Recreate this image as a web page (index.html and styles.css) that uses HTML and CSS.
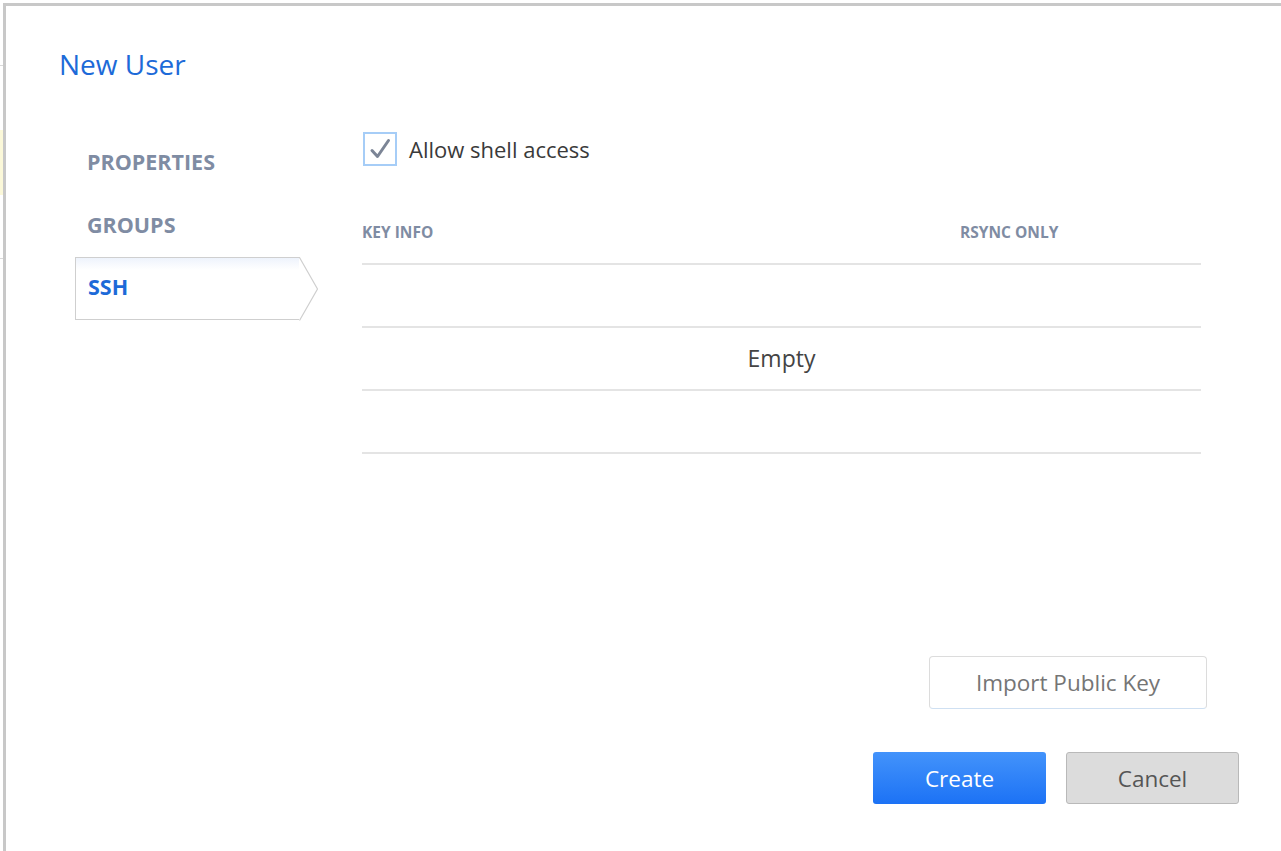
FILE: index.html
```html
<!DOCTYPE html>
<html>
<head>
<meta charset="utf-8">
<link rel="stylesheet" href="styles.css">
</head>
<body>
<div class="backdrop">
  <div class="bg-line bg-line-top"></div>
  <div class="bg-note"></div>
  <div class="bg-line bg-line-mid"></div>
</div>
<div class="dialog">
  <h1 class="title">New User</h1>
  <div class="body">
    <nav class="tabs">
      <div class="tab">PROPERTIES</div>
      <div class="tab">GROUPS</div>
      <div class="tab tab-active">SSH
        <svg class="tab-arrow" width="20" height="64" viewBox="0 0 20 64">
          <path d="M0 1 L1 1 L18.5 32 L1 63 L0 63 Z" fill="#fff"/>
          <path d="M0.5 0.5 L18.5 32 L0.5 63.5" fill="none" stroke="#cfcfcf" stroke-width="1.2"/>
        </svg>
      </div>
    </nav>
    <main class="main">
      <label class="check-row">
        <span class="checkbox">
          <svg width="24" height="24" viewBox="0 0 24 24"><path d="M4 13.5 L9.5 19.5 L20.5 3.5" fill="none" stroke="#7c8596" stroke-width="3" stroke-linecap="round" stroke-linejoin="round"/></svg>
        </span>
        <span class="check-label">Allow shell access</span>
      </label>
      <div class="table">
        <div class="thead">
          <div class="th th-key">KEY INFO</div>
          <div class="th th-rsync">RSYNC ONLY</div>
        </div>
        <div class="row"></div>
        <div class="row row-empty">Empty</div>
        <div class="row"></div>
      </div>
      <div class="import-row">
        <button class="btn btn-import">Import Public Key</button>
      </div>
    </main>
  </div>
  <footer class="footer">
    <button class="btn btn-primary">Create</button>
    <button class="btn btn-cancel">Cancel</button>
  </footer>
</div>
</body>
</html>
```
FILE: styles.css
```css
html, body {
  margin: 0;
  padding: 0;
  background: #fff;
  overflow: hidden;
  width: 1281px;
  height: 851px;
  font-family: "Open Sans", "Noto Sans", sans-serif;
}

.backdrop {
  width: 6px;
  height: 851px;
  display: flex;
  flex-direction: column;
}
.bg-line { height: 1px; background: #d9d9d9; }
.bg-line-top { margin-top: 65px; }
.bg-note { margin-top: 64px; height: 65px; background: #fbf8d9; }
.bg-line-mid { margin-top: 63px; }

.dialog {
  position: absolute;
  left: 3px;
  top: 3px;
  width: 1278px;
  height: 848px;
  box-sizing: border-box;
  border-top: 3px solid #c8c8c8;
  border-left: 3px solid #c8c8c8;
  background: #fff;
  overflow: hidden;
}

.title {
  margin: 0;
  padding: 40px 0 0 53px;
  font-weight: 400;
  font-size: 28px;
  line-height: 36px;
  color: #1d6ad8;
}

.body {
  display: flex;
  margin-top: 49px;
}

.tabs {
  width: 225px;
  margin-left: 69px;
  display: flex;
  flex-direction: column;
}
.tab {
  position: relative;
  height: 63px;
  line-height: 61px;
  padding-left: 12px;
  font-size: 21.5px;
  font-weight: 700;
  color: #7f8ca3;
  box-sizing: border-box;
}
.tab-active {
  height: 63px;
  line-height: 58px;
  color: #1d6ad8;
  border: 1px solid #cfcfcf;
  border-right: none;
  background: linear-gradient(#eef3fc 0, #fff 12px);
}
.tab-arrow {
  position: absolute;
  right: -19px;
  top: -1px;
}

.main {
  margin-left: 62px;
  width: 845px;
  display: flex;
  flex-direction: column;
}

.check-row {
  display: flex;
  align-items: center;
  height: 35px;
}
.checkbox {
  width: 30px;
  height: 30px;
  margin-left: 1px;
  border: 2px solid #a6cdf7;
  display: flex;
  align-items: center;
  justify-content: center;
}
.check-label {
  margin-left: 12px;
  font-size: 22px;
  color: #3a3a3a;
}

.table {
  width: 839px;
  margin-top: 63px;
}
.thead {
  display: flex;
  height: 32px;
  padding-top: 2px;
  border-bottom: 2px solid #e4e4e4;
  font-size: 15.5px;
  font-weight: 700;
  color: #7f8ca3;
  line-height: 2px;
}
.th-key { width: 598px; }
.row {
  height: 61px;
  border-bottom: 2px solid #e4e4e4;
}
.row-empty {
  text-align: center;
  line-height: 61px;
  font-size: 23px;
  color: #444;
}

.import-row {
  display: flex;
  justify-content: flex-end;
  margin-top: 202px;
}

.btn {
  font-family: "Open Sans", "Noto Sans", sans-serif;
  font-size: 22.5px;
  box-sizing: border-box;
  cursor: pointer;
}
.btn-import {
  width: 278px;
  height: 53px;
  background: #fff;
  border: 1px solid #dcdcdc;
  border-bottom-color: #cfe0f2;
  border-radius: 4px;
  color: #757575;
}

.footer {
  display: flex;
  justify-content: flex-end;
  gap: 20px;
  padding-right: 42px;
  margin-top: 43px;
}
.btn-primary {
  width: 173px;
  height: 52px;
  border: none;
  border-radius: 3px;
  background: linear-gradient(#4393fb, #1c72f5);
  color: #fff;
}
.btn-cancel {
  width: 173px;
  height: 52px;
  border: 1px solid #b9b9b9;
  border-radius: 3px;
  background: #dcdcdc;
  color: #555;
}
```
